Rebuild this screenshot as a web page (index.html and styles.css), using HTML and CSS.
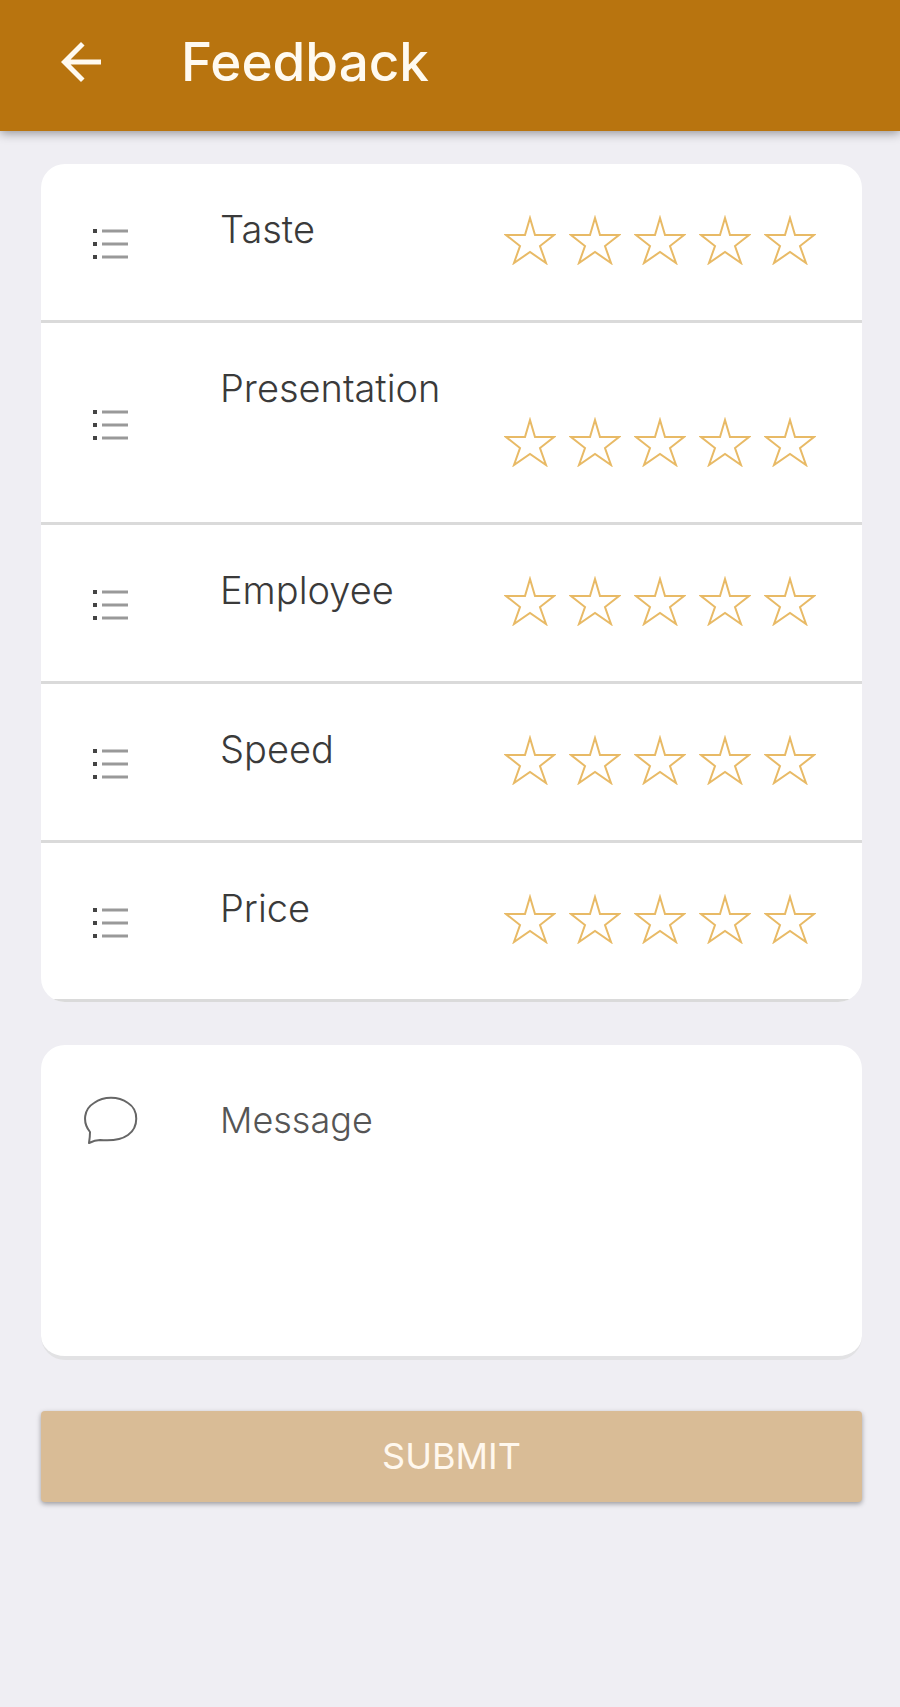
FILE: index.html
```html
<!DOCTYPE html>
<html lang="en">
  <head>
    <meta charset="UTF-8" />
    <meta name="viewport" content="width=device-width, initial-scale=1.0" />
    <title>Feedback</title>
    <link rel="stylesheet" href="styles.css">
  </head>
  <body>
    <svg class="sprite" aria-hidden="true">
      <symbol id="icon-list" viewBox="0 0 36 36">
        <path d="M0 7h4M0 20h4M0 33h4" stroke="#444" stroke-width="4" />
        <path d="M9 7h26M9 20h26M9 33h26" stroke="#999" stroke-width="3" />
      </symbol>
      <symbol id="icon-star" viewBox="0 0 52 50">
        <path d="M26 3L31 20H50L36 31L42 48L26 37L10 48L16 31L2 20H21Z" fill="none" stroke="#e8ba66" stroke-width="2" />
      </symbol>
    </svg>

    <header class="app-bar">
      <a href="#" class="back-link" aria-label="Back">
        <svg class="back-icon" viewBox="0 0 24 24" aria-hidden="true">
          <path d="M20 11H7.830l5.590-5.590L12 4l-8 8 8 8 1.410-1.410L7.830 13H20v-2z" fill="currentColor" />
        </svg>
      </a>
      <h1>Feedback</h1>
    </header>

    <form class="feedback-form">
      <div class="card ratings">
        <!-- Ratings will be added dynamically -->
      </div>

      <div class="card message">
        <label class="lead" for="message" aria-label="Message">
          <svg class="bubble-icon" viewBox="0 0 56 50" aria-hidden="true">
            <path d="M7 36C-1 26 1 13 11 7C21 0 35 0 45 7C56 14 56 31 45 39C38 44 28 45 17 44Q12 44 6 47Q7 41 7 36Z" fill="none" stroke="#666" stroke-width="2" stroke-linejoin="round" />
          </svg>
        </label>
        <textarea id="message" name="message" placeholder="Message"></textarea>
      </div>

      <button type="submit" class="submit-btn">SUBMIT</button>
    </form>

    <script>
      const categories = [
        { id: "taste", name: "Taste" },
        { id: "presentation", name: "Presentation", stacked: true },
        { id: "employee", name: "Employee" },
        { id: "speed", name: "Speed" },
        { id: "price", name: "Price" },
      ];

      const ratings = document.querySelector(".ratings");

      categories.forEach((category) => {
        let stars = "";
        for (let i = 1; i <= 5; i++) {
          stars += `
            <label class="star">
              <input type="radio" name="${category.id}" value="${i}" aria-label="${i} of 5">
              <svg viewBox="0 0 52 50" aria-hidden="true"><use href="#icon-star"></use></svg>
            </label>`;
        }

        const row = document.createElement("div");
        row.className = "rating";
        row.innerHTML = `
          <div class="lead">
            <svg class="list-icon" aria-hidden="true"><use href="#icon-list"></use></svg>
          </div>
          <div class="rating-body ${category.stacked ? "stacked" : ""}">
            <span class="rating-name" id="${category.id}-name">${category.name}</span>
            <div class="stars" role="radiogroup" aria-labelledby="${category.id}-name">${stars}</div>
          </div>
        `;
        ratings.appendChild(row);
      });

      // Fill every star up to the chosen one
      ratings.addEventListener("change", (e) => {
        const stars = e.target.closest(".stars").querySelectorAll(".star");
        stars.forEach((star, i) => {
          star.classList.toggle("filled", i < Number(e.target.value));
        });
      });
    </script>
  </body>
</html>
```
FILE: styles.css
```css
* {
  margin: 0;
  padding: 0;
  box-sizing: border-box;
}

body {
  font-family: Inter, "Open Sans", sans-serif;
  font-size: 36px;
  font-weight: 300;
  color: #3a3a3a;
  background-color: #efeef3;
}

.sprite {
  display: none;
}

.app-bar {
  display: flex;
  align-items: center;
  gap: 70px;
  height: 131px;
  padding: 0 51px 8px;
  color: #fffaf0;
  background-color: #b8740f;
  box-shadow: 0 2px 10px rgba(0, 0, 0, 0.4);
}

.app-bar h1 {
  font-size: 53px;
  font-weight: 500;
}

.back-link {
  color: inherit;
}

.back-icon {
  display: block;
  width: 60px;
  height: 60px;
}

.feedback-form {
  padding: 33px 38px 40px 41px;
}

.card {
  overflow: hidden;
  background-color: #fff;
  border-radius: 24px;
}

.lead {
  display: flex;
  flex: none;
  justify-content: center;
  width: 140px;
}

.rating {
  display: flex;
  align-items: center;
  gap: 39px;
  border-bottom: 3px solid #dadada;
}

.list-icon {
  width: 36px;
  height: 36px;
}

.rating-body {
  display: flex;
  flex: 1;
  justify-content: space-between;
  padding: 44px 46px 55px 0;
}

.rating-body.stacked {
  flex-direction: column;
}

.rating-name {
  font-size: 38px;
  line-height: 43px;
}

.stars {
  display: flex;
  gap: 13px;
  align-self: flex-end;
  padding-top: 7px;
}

.star {
  display: grid;
  width: 52px;
  height: 50px;
  cursor: pointer;
}

.star input,
.star svg {
  grid-area: 1 / 1;
  width: 100%;
  height: 100%;
}

.star input {
  appearance: none;
}

.star.filled svg {
  background-color: #fdf3de;
}

.message {
  display: flex;
  gap: 39px;
  margin-top: 43px;
  padding-top: 51px;
  border-bottom: 4px solid #e2e2e4;
}

.bubble-icon {
  width: 56px;
  height: 50px;
}

textarea {
  flex: 1;
  min-width: 0;
  height: 260px;
  padding-right: 46px;
  border: none;
  outline: none;
  resize: none;
  background: none;
  font: inherit;
  line-height: 48px;
  color: #333;
}

textarea::placeholder {
  color: #555;
  opacity: 1;
}

.submit-btn {
  display: block;
  width: 100%;
  margin-top: 51px;
  padding: 23px;
  border: none;
  border-radius: 4px;
  font: inherit;
  font-weight: 400;
  line-height: 45px;
  color: #fff8ee;
  background-color: #d9bc96;
  box-shadow: 0 2px 5px rgba(0, 0, 0, 0.35);
  cursor: pointer;
}
```
